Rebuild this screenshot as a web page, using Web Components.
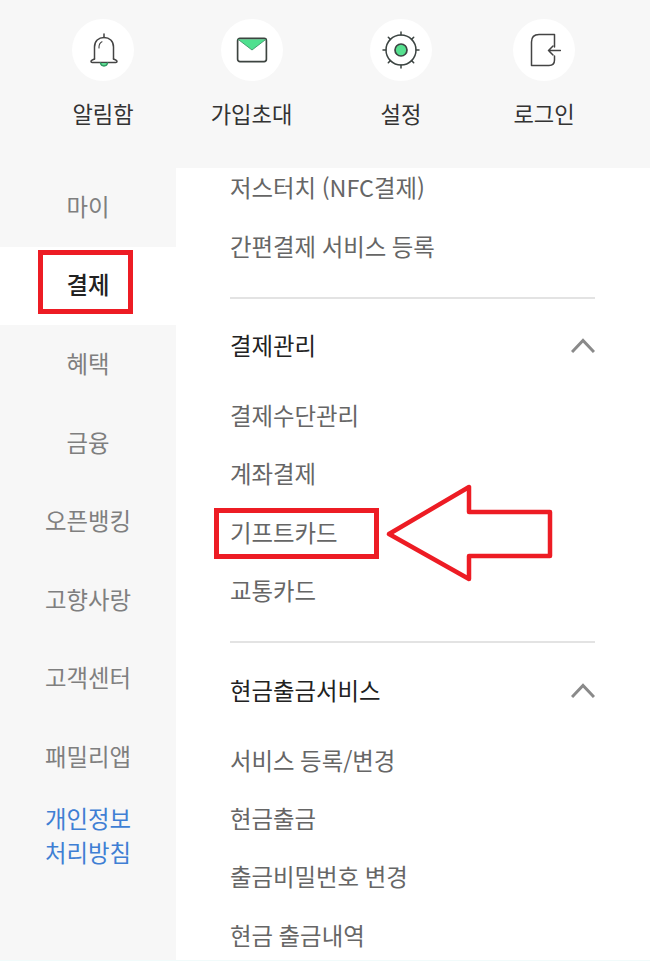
<!DOCTYPE html>
<html lang="ko">
<head>
<meta charset="utf-8">
<style>
  html, body { margin: 0; background: #fff; }
  body { width: 650px; height: 975px; overflow: hidden; font-family: "Noto Sans CJK KR", "Noto Sans", sans-serif; }
</style>
</head>
<body>
<menu-page></menu-page>
<script>
const ICONS = {
    bell: `<svg width="28" height="34" viewBox="0 0 28 34" fill="none" stroke="#444" stroke-width="1.500" stroke-linecap="round" stroke-linejoin="round" style="margin-left:1px">
        <path d="M14 1v3.500"/><path d="M4.500 26V14C4.500 8 8.500 4.500 14 4.500S23.500 8 23.500 14v12"/>
        <path d="M4.500 26c-2 .6-3.500 1.400-3.500 2.500 0 .7.500 1 1.200 1h23.600c.7 0 1.200-.3 1.200-1 0-1.100-1.500-1.900-3.500-2.500"/>
        <path d="M9 15v-1c0-2.500 1-4.300 3-5.300" stroke-width="1.100"/>
        <path d="M10.500 30c.3 1.800 1.700 2.900 3.500 2.900s3.200-1.100 3.500-2.900" fill="#5fdc92" stroke="#2f9a63"/></svg>`,
    mail: `<svg width="32" height="26" viewBox="0 0 34 28" fill="none" stroke-linejoin="round" stroke-linecap="round">
        <path d="M2 2.500h30L17 14z" fill="#4fe08f"/>
        <rect x="1.500" y="1.500" width="31" height="25" rx="2.500" stroke="#3d4440" stroke-width="1.800"/>
        <path d="M2 2.500L17 14 32 2.500" stroke="#3d9a6a" stroke-width="1"/></svg>`,
    gear: `<svg width="38" height="38" viewBox="0 0 38 38" fill="none" stroke="#3c4442" stroke-width="1.500" stroke-linecap="round">
        <circle cx="19" cy="19" r="15"/>
        <path d="M19 1v3M19 34v3M1 19h3M34 19h3M6.300 6.300l2.100 2.100M31.700 6.300l-2.100 2.100M6.300 31.700l2.100-2.100M31.700 31.700l-2.100-2.100"/>
        <circle cx="19" cy="19" r="6" fill="#56e08f" stroke-width="1.700"/></svg>`,
    login: `<svg width="34" height="34" viewBox="0 0 34 34" fill="none" stroke="#444" stroke-width="1.500" stroke-linecap="round" stroke-linejoin="round">
        <path d="M27.500 14V1.500H12C7 1.500 4.500 4.500 4.500 9V32.500H22C25.500 32.500 27.500 30.500 27.500 27V23"/>
        <path d="M33.500 17.500H21.500M26 13l-4.500 4.500L26 22"/></svg>`
};

class TopAction extends HTMLElement {
    constructor() {
        super();
        this.attachShadow({ mode: "open" });
        this.shadowRoot.innerHTML = `
        <style>
          :host { display: flex; flex-direction: column; align-items: center; }
          .circle {
            width: 62px; height: 62px; border-radius: 50%; background: #fff;
            display: flex; align-items: center; justify-content: center;
          }
          .label { margin-top: 15px; font-size: 22.200px; line-height: 34px; color: #333; white-space: nowrap; }
        </style>
        <div class="circle"></div>
        <div class="label"><slot></slot></div>
        `;
    }

    connectedCallback() {
        this.shadowRoot.querySelector(".circle").innerHTML = ICONS[this.getAttribute("icon")] || "";
    }
}

class SideItem extends HTMLElement {
    constructor() {
        super();
        this.attachShadow({ mode: "open" });
        this.shadowRoot.innerHTML = `
        <style>
          :host {
            display: flex; align-items: center; justify-content: center; box-sizing: border-box;
            height: 78.600px; padding-bottom: 3px; font-size: 23.400px; color: #7f7f7f;
          }
          :host([active]) { background: #fff; color: #222; font-weight: 500; }
        </style>
        <slot></slot>
        `;
    }
}

class SubGroup extends HTMLElement {
    constructor() {
        super();
        this.attachShadow({ mode: "open" });
        this.shadowRoot.innerHTML = `
        <style>
          :host { display: block; border-top: 2px solid #e3e3e3; margin-top: 22px; }
          .head {
            display: flex; align-items: center; justify-content: space-between;
            height: 93px; margin-bottom: -6px; font-size: 23.400px; color: #222;
          }
          svg { display: block; }
        </style>
        <div class="head">
          <span id="title"></span>
          <svg width="24" height="16" viewBox="0 0 24 16" fill="none" stroke="#8a8a8a" stroke-width="3"><path d="M1 15L12 3.500 23 15"/></svg>
        </div>
        <slot></slot>
        `;
    }

    connectedCallback() {
        this.shadowRoot.getElementById("title").textContent = this.getAttribute("title");
    }
}

class SubLink extends HTMLElement {
    constructor() {
        super();
        this.attachShadow({ mode: "open" });
        this.shadowRoot.innerHTML = `
        <style>
          :host {
            display: flex; align-items: center; height: 58.400px;
            font-size: 23.400px; word-spacing: -1px; color: #666; white-space: nowrap;
          }
        </style>
        <slot></slot>
        `;
    }
}

class MenuPage extends HTMLElement {
    constructor() {
        super();
        this.attachShadow({ mode: "open" });
        this.shadowRoot.innerHTML = `
        <style>
          :host { display: block; position: relative; width: 650px; height: 975px; background: #fff; overflow: hidden; }
          .app { width: 650px; height: 961px; box-sizing: border-box; display: flex; flex-direction: column; background: #f7f7f7; border-bottom: 1px solid #f1fbfb; }
          .top {
            display: grid; grid-template-columns: 148px 149px 150px 136px;
            padding: 19px 0 0 29px; height: 149px; flex: none;
          }
          .body { display: flex; flex: 1; min-height: 0; }
          .side { width: 176px; flex: none; }
          .privacy {
            padding-top: 4.600px; text-align: center; font-size: 23.400px; line-height: 34px; color: #3f7fd4;
          }
          .panel { flex: 1; background: #fff; padding: 0 55px 0 54px; overflow: hidden; }
          .scroll { margin-top: -10px; }
          .box { position: absolute; box-sizing: border-box; border: 5px solid #ed1c24; }
          .arrow { position: absolute; left: 384px; top: 482px; }
        </style>
        <div class="app">
          <div class="top">
            <top-action icon="bell">알림함</top-action>
            <top-action icon="mail">가입초대</top-action>
            <top-action icon="gear">설정</top-action>
            <top-action icon="login">로그인</top-action>
          </div>
          <div class="body">
            <div class="side">
              <side-item>마이</side-item>
              <side-item active>결제</side-item>
              <side-item>혜택</side-item>
              <side-item>금융</side-item>
              <side-item>오픈뱅킹</side-item>
              <side-item>고향사랑</side-item>
              <side-item>고객센터</side-item>
              <side-item>패밀리앱</side-item>
              <div class="privacy">개인정보<br>처리방침</div>
            </div>
            <div class="panel">
              <div class="scroll">
                <sub-link>저스터치 (NFC결제)</sub-link>
                <sub-link>간편결제 서비스 등록</sub-link>
                <sub-group title="결제관리">
                  <sub-link>결제수단관리</sub-link>
                  <sub-link>계좌결제</sub-link>
                  <sub-link>기프트카드</sub-link>
                  <sub-link>교통카드</sub-link>
                </sub-group>
                <sub-group title="현금출금서비스">
                  <sub-link>서비스 등록/변경</sub-link>
                  <sub-link>현금출금</sub-link>
                  <sub-link>출금비밀번호 변경</sub-link>
                  <sub-link>현금 출금내역</sub-link>
                </sub-group>
              </div>
            </div>
          </div>
        </div>
        <div class="box" style="left:38px;top:250px;width:95px;height:64px"></div>
        <div class="box" style="left:214px;top:508px;width:165px;height:51px"></div>
        <svg class="arrow" width="172" height="102" viewBox="384 482 172 102" fill="none" stroke="#ed1c24" stroke-width="4.500" stroke-linejoin="round">
          <path d="M389 534L469 487V512H550V556H469V579Z"/>
        </svg>
        `;
    }
}

customElements.define("top-action", TopAction);
customElements.define("side-item", SideItem);
customElements.define("sub-group", SubGroup);
customElements.define("sub-link", SubLink);
customElements.define("menu-page", MenuPage);
</script>
</body>
</html>
